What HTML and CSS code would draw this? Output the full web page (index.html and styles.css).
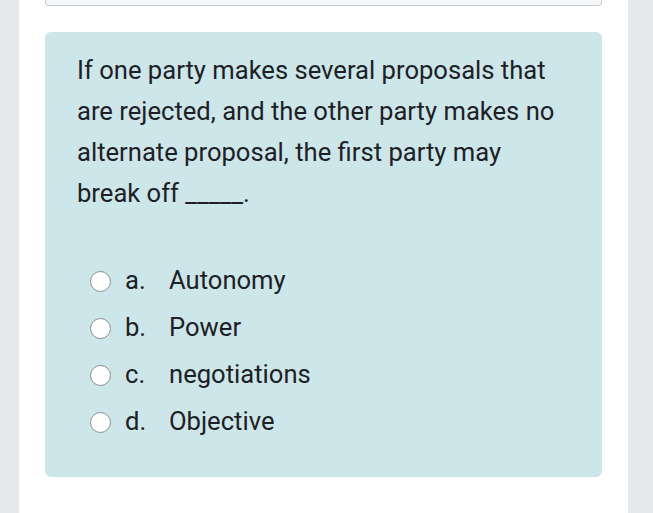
FILE: index.html
```html
<!DOCTYPE html>
<html>
<head>
<meta charset="utf-8">
<link rel="stylesheet" href="styles.css">
</head>
<body>
<div class="page">
  <div class="prev-box"></div>
  <div class="question">
    <p class="qtext">If one party makes several proposals that are rejected, and the other party makes no alternate proposal, the first party may break off _____.</p>
    <div class="answers">
      <div class="opt"><span class="radio"></span><span class="letter">a.</span><span class="label">Autonomy</span></div>
      <div class="opt"><span class="radio"></span><span class="letter">b.</span><span class="label">Power</span></div>
      <div class="opt"><span class="radio"></span><span class="letter">c.</span><span class="label">negotiations</span></div>
      <div class="opt"><span class="radio"></span><span class="letter">d.</span><span class="label">Objective</span></div>
    </div>
  </div>
</div>
</body>
</html>
```

FILE: styles.css
```css
html, body {
  margin: 0;
  padding: 0;
  height: 100%;
}
body {
  background: #e6e9ec;
  font-family: Roboto, "Liberation Sans", sans-serif;
  color: #1d2125;
}
.page {
  margin-left: 19px;
  width: 609px;
  min-height: 100%;
  background: #ffffff;
  padding: 0 26px 0 26px;
  box-sizing: border-box;
}
.prev-box {
  height: 5px;
  border: 1px solid #c5ccd3;
  border-top: none;
  border-radius: 0 0 4px 4px;
  background: #f5f6f8;
}
.question {
  margin-top: 26px;
  background: #cde6ea;
  border-radius: 6px;
  height: 445px;
  box-sizing: border-box;
  padding: 18px 32px 0 32px;
}
.qtext {
  margin: 0;
  font-size: 25.6px;
  line-height: 41px;
  padding-right: 10px;
}
.answers {
  margin-top: 46px;
  display: flex;
  flex-direction: column;
  gap: 6px;
}
.opt {
  display: flex;
  align-items: flex-start;
  font-size: 25.6px;
  line-height: 41px;
  padding-left: 13px;
}
.radio {
  width: 19px;
  height: 19px;
  margin-top: 10.5px;
  border: 1.5px solid #8a8d91;
  border-radius: 50%;
  background: #fff;
  flex: none;
}
.letter {
  margin-left: 14px;
  width: 44px;
}
```
